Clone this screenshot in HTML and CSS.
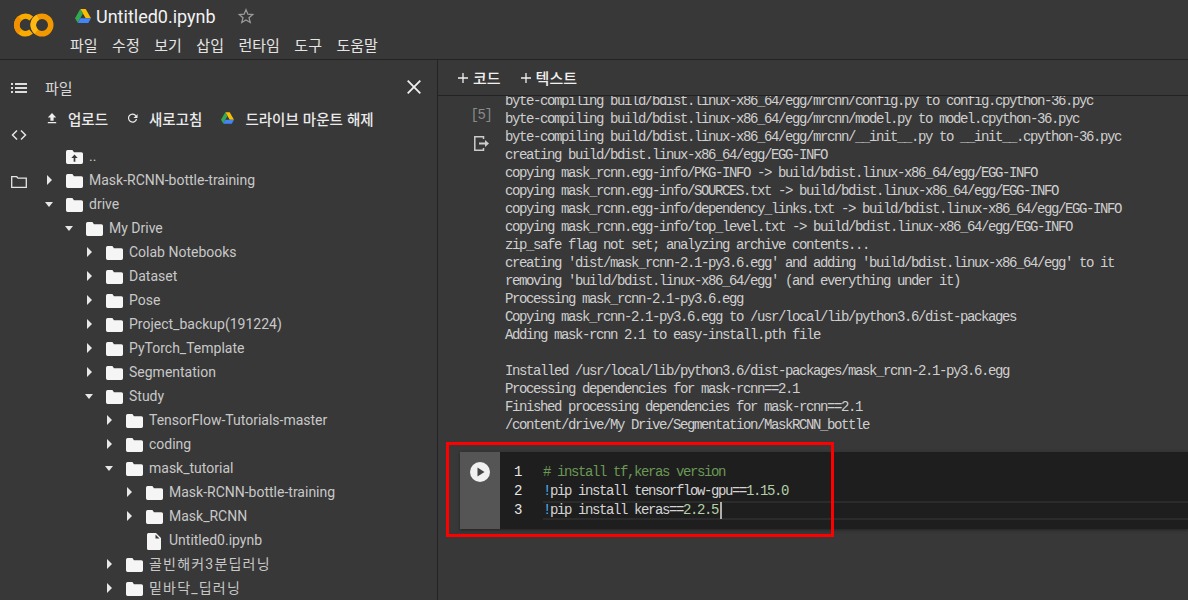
FILE: index.html
```html
<!DOCTYPE html>
<html lang="ko">
<head>
<meta charset="utf-8">
<title>Untitled0.ipynb</title>
<link rel="stylesheet" href="styles.css">
</head>
<body>
<div class="app">
  <header class="header">
    <svg class="logo" width="42" height="26" viewBox="0 0 42 26" fill="none" stroke-width="5.500">
      <circle cx="12.500" cy="13" r="8.750" stroke="#f9ab00" stroke-dasharray="39.700 15.300" transform="rotate(50 12.500 13)"/>
      <circle cx="12.500" cy="13" r="8.750" stroke="#f29000" stroke-dasharray="15.300 39.700" transform="rotate(130 12.500 13)"/>
      <circle cx="29" cy="13" r="8.750" stroke="#f29900"/>
      <circle cx="29" cy="13" r="8.750" stroke="#fdb813" stroke-dasharray="17 38" transform="rotate(130 29 13)"/>
    </svg>
    <div class="head-main">
      <div class="title-row">
        <svg class="drive drive-title" viewBox="0 0 16 14" width="16" height="14"><path d="M5.300 0h5.400l5.300 9.200h-5.300z" fill="#fbbc04"/><path d="M5.300 0L0 9.200l2.700 4.600L8 4.600z" fill="#34a853"/><path d="M5.300 9.200h10.700l-2.700 4.800H2.700z" fill="#4285f4"/></svg>
        <span class="title">Untitled0.ipynb</span>
        <svg class="star" viewBox="0 0 24 24" width="18" height="18"><path d="M12 3.500l2.500 6 6.500.5-5 4.300 1.600 6.300L12 17.200l-5.600 3.400L8 14.300 3 10l6.500-.5z" fill="none" stroke="#9a9a9a" stroke-width="1.700"/></svg>
      </div>
      <nav class="menu"><span>파일</span><span>수정</span><span>보기</span><span>삽입</span><span>런타임</span><span>도구</span><span>도움말</span></nav>
    </div>
  </header>
  <div class="body">
    <aside class="side">
      <div class="rail">
        <svg class="rail-ic" viewBox="0 0 16 12" width="16" height="12"><g fill="#ddd"><rect x="0" y="1" width="2" height="2"/><rect x="4" y="1" width="12" height="2"/><rect x="0" y="5" width="2" height="2"/><rect x="4" y="5" width="12" height="2"/><rect x="0" y="9" width="2" height="2"/><rect x="4" y="9" width="12" height="2"/></g></svg>
        <svg class="rail-ic" viewBox="0 0 16 12" width="16" height="12"><path d="M6 1.500L1.500 6 6 10.500M10 1.500L14.500 6 10 10.500" fill="none" stroke="#e4e4e4" stroke-width="1.500"/></svg>
        <svg class="rail-ic" viewBox="0 0 16 12" width="16" height="12"><path d="M.7 .7h5l1.300 1.500h8.300v9.100H.7z" fill="none" stroke="#e4e4e4" stroke-width="1.300"/></svg>
      </div>
      <div class="panel">
        <div class="panel-head"><span class="panel-title">파일</span>
          <svg viewBox="0 0 14 14" width="14" height="14"><path d="M.700 .700l12.600 12.600M13.300 .700L.700 13.300" stroke="#f0f0f0" stroke-width="1.800"/></svg>
        </div>
        <div class="actions">
          <span class="action"><svg viewBox="0 0 10 12" width="10" height="12"><path d="M5 1L.800 5.600h2.600v3.200h3.200V5.600h2.600zM.800 10h8.400v1.200H.800z" fill="#eee"/></svg>업로드</span>
          <span class="action"><svg viewBox="0 0 12 12" width="11" height="12"><path d="M10.200 3.200A5 5 0 1 0 11 7H9.600a3.700 3.700 0 1 1-.400-2.800L7 6h4.500V1.500z" fill="#eee"/></svg>새로고침</span>
          <span class="action"><svg viewBox="0 0 16 14" width="13" height="12"><path d="M5.300 0h5.400l5.300 9.200h-5.300z" fill="#fbbc04"/><path d="M5.300 0L0 9.200l2.700 4.600L8 4.600z" fill="#34a853"/><path d="M5.300 9.200h10.700l-2.700 4.800H2.700z" fill="#4285f4"/></svg>드라이브 마운트 해제</span>
        </div>
        <div class="tree">
          <div class="row l0"><i class="ch"></i><svg class="fo" viewBox="0 0 16 13"><path d="M0 1.500A1.500 1.500 0 0 1 1.500 0h4.500l1.500 2h7A1.500 1.500 0 0 1 16 3.500v8a1.500 1.500 0 0 1-1.500 1.500h-13A1.500 1.500 0 0 1 0 11.500zM5 7.500h2.200V11h1.600V7.500H11L8 4.200z" fill="#f5f5f5" fill-rule="evenodd"/></svg><span>..</span></div>
          <div class="row l0"><i class="ch r"></i><svg class="fo"><use href="#f"/></svg><span>Mask-RCNN-bottle-training</span></div>
          <div class="row l0"><i class="ch d"></i><svg class="fo"><use href="#f"/></svg><span>drive</span></div>
          <div class="row l1"><i class="ch d"></i><svg class="fo"><use href="#f"/></svg><span>My Drive</span></div>
          <div class="row l2"><i class="ch r"></i><svg class="fo"><use href="#f"/></svg><span>Colab Notebooks</span></div>
          <div class="row l2"><i class="ch r"></i><svg class="fo"><use href="#f"/></svg><span>Dataset</span></div>
          <div class="row l2"><i class="ch r"></i><svg class="fo"><use href="#f"/></svg><span>Pose</span></div>
          <div class="row l2"><i class="ch r"></i><svg class="fo"><use href="#f"/></svg><span>Project_backup(191224)</span></div>
          <div class="row l2"><i class="ch r"></i><svg class="fo"><use href="#f"/></svg><span>PyTorch_Template</span></div>
          <div class="row l2"><i class="ch r"></i><svg class="fo"><use href="#f"/></svg><span>Segmentation</span></div>
          <div class="row l2"><i class="ch d"></i><svg class="fo"><use href="#f"/></svg><span>Study</span></div>
          <div class="row l3"><i class="ch r"></i><svg class="fo"><use href="#f"/></svg><span>TensorFlow-Tutorials-master</span></div>
          <div class="row l3"><i class="ch r"></i><svg class="fo"><use href="#f"/></svg><span>coding</span></div>
          <div class="row l3"><i class="ch d"></i><svg class="fo"><use href="#f"/></svg><span>mask_tutorial</span></div>
          <div class="row l4"><i class="ch r"></i><svg class="fo"><use href="#f"/></svg><span>Mask-RCNN-bottle-training</span></div>
          <div class="row l4"><i class="ch r"></i><svg class="fo"><use href="#f"/></svg><span>Mask_RCNN</span></div>
          <div class="row l4"><i class="ch"></i><svg class="fi" viewBox="0 0 14 17"><path d="M1.500 0H9l5 5v10.500a1.500 1.500 0 0 1-1.500 1.500h-11A1.500 1.500 0 0 1 0 15.500v-14A1.500 1.500 0 0 1 1.500 0zM8.500 1.500V5.500h4z" fill="#f5f5f5" fill-rule="evenodd"/></svg><span>Untitled0.ipynb</span></div>
          <div class="row l3"><i class="ch r"></i><svg class="fo"><use href="#f"/></svg><span class="ko">골빈해커3분딥러닝</span></div>
          <div class="row l3"><i class="ch r"></i><svg class="fo"><use href="#f"/></svg><span class="ko">밑바닥_딥러닝</span></div>
        </div>
      </div>
    </aside>
    <main class="main">
      <div class="toolbar">
        <span class="tb"><svg viewBox="0 0 10 10" width="10" height="10"><path d="M5 0v10M0 5h10" stroke="#f0f0f0" stroke-width="1.300"/></svg>코드</span>
        <span class="tb"><svg viewBox="0 0 10 10" width="10" height="10"><path d="M5 0v10M0 5h10" stroke="#f0f0f0" stroke-width="1.300"/></svg>텍스트</span>
      </div>
      <div class="scroll">
        <section class="out">
          <div class="out-gutter">
            <span class="count">[5]</span>
            <svg viewBox="0 0 15 15" width="15" height="15"><path d="M9.500 3V.8H.8v13.400h8.700V12" fill="none" stroke="#ccc" stroke-width="1.500"/><path d="M5 6.600h6V4l4 3.500-4 3.500V8.400H5z" fill="#ccc"/></svg>
          </div>
<pre class="log">byte-compiling build/bdist.linux-x86_64/egg/mrcnn/config.py to config.cpython-36.pyc
byte-compiling build/bdist.linux-x86_64/egg/mrcnn/model.py to model.cpython-36.pyc
byte-compiling build/bdist.linux-x86_64/egg/mrcnn/__init__.py to __init__.cpython-36.pyc
creating build/bdist.linux-x86_64/egg/EGG-INFO
copying mask_rcnn.egg-info/PKG-INFO -&gt; build/bdist.linux-x86_64/egg/EGG-INFO
copying mask_rcnn.egg-info/SOURCES.txt -&gt; build/bdist.linux-x86_64/egg/EGG-INFO
copying mask_rcnn.egg-info/dependency_links.txt -&gt; build/bdist.linux-x86_64/egg/EGG-INFO
copying mask_rcnn.egg-info/top_level.txt -&gt; build/bdist.linux-x86_64/egg/EGG-INFO
zip_safe flag not set; analyzing archive contents...
creating 'dist/mask_rcnn-2.1-py3.6.egg' and adding 'build/bdist.linux-x86_64/egg' to it
removing 'build/bdist.linux-x86_64/egg' (and everything under it)
Processing mask_rcnn-2.1-py3.6.egg
Copying mask_rcnn-2.1-py3.6.egg to /usr/local/lib/python3.6/dist-packages
Adding mask-rcnn 2.1 to easy-install.pth file

Installed /usr/local/lib/python3.6/dist-packages/mask_rcnn-2.1-py3.6.egg
Processing dependencies for mask-rcnn==2.1
Finished processing dependencies for mask-rcnn==2.1
/content/drive/My Drive/Segmentation/MaskRCNN_bottle</pre>
        </section>
        <section class="cell">
          <div class="run"><svg viewBox="0 0 20 20" width="20" height="20"><circle cx="10" cy="10" r="10" fill="#f1f1f1"/><path d="M7.500 5.500l7 4.500-7 4.500z" fill="#444"/></svg></div>
          <div class="editor">
            <div class="ln"><span class="num">1</span><code class="com"># install tf,keras version</code></div>
            <div class="ln"><span class="num">2</span><code><b class="bang">!</b>pip install tensorflow-gpu==<b class="val">1.15.0</b></code></div>
            <div class="ln act"><span class="num">3</span><code><b class="bang">!</b>pip install keras==<b class="val">2.2.5</b><i class="caret"></i></code></div>
          </div>
        </section>
      </div>
    </main>
  </div>
  <div class="mark"></div>
</div>
<svg class="defs" width="0" height="0"><symbol id="f" viewBox="0 0 16 13"><path d="M0 1.500A1.500 1.500 0 0 1 1.500 0h4.500l1.500 2h7A1.500 1.500 0 0 1 16 3.500v8a1.500 1.500 0 0 1-1.500 1.500h-13A1.500 1.500 0 0 1 0 11.500z" fill="#f5f5f5"/></symbol></svg>
</body>
</html>
```

FILE: styles.css
```css
* { box-sizing: border-box; }
html, body { margin: 0; height: 100%; }
body { background: #383838; color: #e0e0e0; font-family: Roboto, "Noto Sans CJK KR", sans-serif; overflow: hidden; }
.app { position: relative; width: 1188px; height: 600px; overflow: hidden; display: flex; flex-direction: column; }
.defs { position: absolute; }
.header { height: 60px; flex: none; display: flex; border-bottom: 1px solid #232323; padding-left: 13px; }
.logo { margin-top: 12px; flex: none; }
.head-main { margin-left: 15px; padding-top: 4px; }
.title-row { display: flex; align-items: center; height: 24px; padding-left: 5px; }
.title { font-size: 18px; color: #f2f2f2; margin-left: 5px; }
.star { margin-left: 21px; }
.menu { display: flex; gap: 14.500px; font: 15px "Noto Sans CJK KR", sans-serif; color: #e4e4e4; height: 24px; line-height: 24px; margin-top: 5px; }
.body { flex: 1; display: flex; min-height: 0; }
.side { width: 438px; flex: none; display: flex; border-right: 1px solid #232323; }
.rail { width: 37px; flex: none; display: flex; flex-direction: column; align-items: center; padding-top: 22px; gap: 35px; padding-left: 1px; }
.rail-ic { flex: none; }
.panel { flex: 1; min-width: 0; }
.panel-head { height: 24px; margin-top: 15px; display: flex; justify-content: space-between; align-items: center; padding: 0 16px 0 8px; }
.panel-title { font: 15px "Noto Sans CJK KR", sans-serif; color: #d8d8d8; }
.actions { display: flex; gap: 19px; margin-top: 7px; padding-left: 10px; height: 24px; align-items: center; }
.action { display: flex; align-items: center; gap: 11px; font: 500 14.500px "Noto Sans CJK KR", sans-serif; color: #ebebeb; }
.tree { margin-top: 14px; }
.row { height: 24px; display: flex; align-items: center; font-size: 14px; color: #c8c8c8; }
.l0 { padding-left: 8px; }
.l1 { padding-left: 28px; }
.l2 { padding-left: 48px; }
.l3 { padding-left: 68px; }
.l4 { padding-left: 88px; }
.ch { width: 21px; height: 10px; flex: none; position: relative; }
.ch.r::before { content: ""; position: absolute; left: 2px; top: 0; border-left: 5px solid #e8e8e8; border-top: 5px solid transparent; border-bottom: 5px solid transparent; }
.ch.d::before { content: ""; position: absolute; left: 0; top: 3px; border-top: 5px solid #e8e8e8; border-left: 4.500px solid transparent; border-right: 4.500px solid transparent; }
.fo { width: 17px; height: 14px; flex: none; margin-top: 2px; }
.fi { width: 14px; height: 17px; flex: none; margin: 2px 2px 0 1px; }
.row span { margin-left: 6px; }
.row .ko { letter-spacing: 1.200px; margin-bottom: 2px; }
.main { flex: 1; min-width: 0; display: flex; flex-direction: column; }
.toolbar { height: 36px; flex: none; border-bottom: 1px solid #232323; display: flex; gap: 20px; align-items: center; padding-left: 20px; font: 500 15px "Noto Sans CJK KR", sans-serif; color: #f0f0f0; }
.tb { display: flex; align-items: center; gap: 5px; }
.scroll { flex: 1; overflow: hidden; min-height: 0; }
.out { display: flex; height: 338px; overflow: hidden; }
.out-gutter { width: 67px; flex: none; display: flex; flex-direction: column; align-items: center; padding: 10px 0 0 19px; gap: 12px; }
.count { font: 14px "Liberation Mono", monospace; letter-spacing: -1.400px; color: #8a8a8a; line-height: 18px; }
.log { margin: -4px 0 0; font: 14px/18px "Liberation Mono", monospace; letter-spacing: -1.400px; color: #cfcfcf; }
.cell { display: flex; height: 77px; margin: 18px 0 0 22px; background: #1e1e1e; box-shadow: 0 1px 3px rgba(0,0,0,.4); }
.run { width: 40px; flex: none; background: #555; display: flex; justify-content: center; padding-top: 10px; }
.editor { flex: 1; padding-top: 11px; font: 14px/19px "Liberation Mono", monospace; letter-spacing: -1.400px; }
.ln { display: flex; height: 19px; }
.num { width: 43px; flex: none; padding-left: 14px; color: #e8e8e8; }
.ln code { font: inherit; color: #d4d4d4; flex: 1; }
.act code { border-top: 2px solid #2b2b2b; border-bottom: 2px solid #2b2b2b; line-height: 15px; }
.com { color: #6a9955 !important; }
.bang { font-weight: 400; color: #4fb1f0; }
.val { font-weight: 400; color: #b5cea8; }
.caret { display: inline-block; width: 2px; height: 17px; background: #aeafad; vertical-align: -3px; margin: -2px 0 -2px 2px; }
.mark { position: absolute; left: 446px; top: 442px; width: 388px; height: 95px; border: 3px solid #fe0000; }
```
